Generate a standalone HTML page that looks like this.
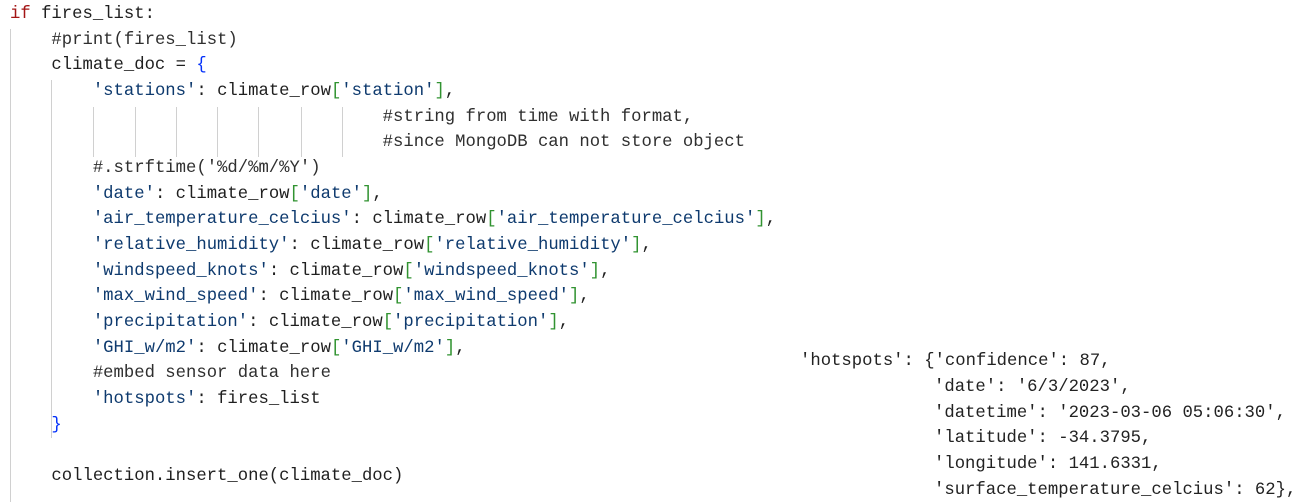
<!DOCTYPE html>
<html><head><meta charset="utf-8"><style>
html,body{margin:0;padding:0;background:#fff;width:1303px;height:502px;overflow:hidden;position:relative}
.l{position:absolute;left:10px;white-space:pre;font-family:"Liberation Mono",monospace;font-size:17.25px;line-height:25.67px;height:25.67px;color:#1f1f1f}
.s{color:#0e3a6e}.k{color:#a31515}.c{color:#2f2f2f}.b{color:#0431fa}.g{color:#319331}
.r{position:absolute;white-space:pre;font-family:"Liberation Mono",monospace;font-size:17.25px;line-height:25.67px;color:#222}
.v{position:absolute;width:1px;background:#d0d0d0}
</style></head><body>
<div class="v" style="left:10px;top:29px;height:473px"></div>
<div class="v" style="left:51px;top:80px;height:358px"></div>
<div class="v" style="left:93px;top:107px;height:50px"></div>
<div class="v" style="left:135px;top:107px;height:50px"></div>
<div class="v" style="left:176px;top:107px;height:50px"></div>
<div class="v" style="left:217px;top:107px;height:50px"></div>
<div class="v" style="left:258px;top:107px;height:50px"></div>
<div class="v" style="left:301px;top:107px;height:50px"></div>
<div class="v" style="left:342px;top:107px;height:50px"></div>

<div class="l" style="top:2px"><span class="k">if</span> fires_list:</div>
<div class="l" style="top:27.7px">    <span class="c">#print(fires_list)</span></div>
<div class="l" style="top:53.3px">    climate_doc = <span class="b">{</span></div>
<div class="l" style="top:79px">        <span class="s">'stations'</span>: climate_row<span class="g">[</span><span class="s">'station'</span><span class="g">]</span>,</div>
<div class="l" style="top:104.7px">                                    <span class="c">#string from time with format,</span></div>
<div class="l" style="top:130.4px">                                    <span class="c">#since MongoDB can not store object</span></div>
<div class="l" style="top:156px">        <span class="c">#.strftime('%d/%m/%Y')</span></div>
<div class="l" style="top:181.7px">        <span class="s">'date'</span>: climate_row<span class="g">[</span><span class="s">'date'</span><span class="g">]</span>,</div>
<div class="l" style="top:207.4px">        <span class="s">'air_temperature_celcius'</span>: climate_row<span class="g">[</span><span class="s">'air_temperature_celcius'</span><span class="g">]</span>,</div>
<div class="l" style="top:233px">        <span class="s">'relative_humidity'</span>: climate_row<span class="g">[</span><span class="s">'relative_humidity'</span><span class="g">]</span>,</div>
<div class="l" style="top:258.7px">        <span class="s">'windspeed_knots'</span>: climate_row<span class="g">[</span><span class="s">'windspeed_knots'</span><span class="g">]</span>,</div>
<div class="l" style="top:284.4px">        <span class="s">'max_wind_speed'</span>: climate_row<span class="g">[</span><span class="s">'max_wind_speed'</span><span class="g">]</span>,</div>
<div class="l" style="top:310px">        <span class="s">'precipitation'</span>: climate_row<span class="g">[</span><span class="s">'precipitation'</span><span class="g">]</span>,</div>
<div class="l" style="top:335.7px">        <span class="s">'GHI_w/m2'</span>: climate_row<span class="g">[</span><span class="s">'GHI_w/m2'</span><span class="g">]</span>,</div>
<div class="l" style="top:361.4px">        <span class="c">#embed sensor data here</span></div>
<div class="l" style="top:387px">        <span class="s">'hotspots'</span>: fires_list</div>
<div class="l" style="top:412.7px">    <span class="b">}</span></div>
<div class="l" style="top:464px">    collection.insert_one(climate_doc)</div>

<div class="r" style="left:800px;top:349px">'hotspots': {'confidence': 87,</div>
<div class="r" style="left:934px;top:375px">'date': '6/3/2023',
'datetime': '2023-03-06 05:06:30',
'latitude': -34.3795,
'longitude': 141.6331,
'surface_temperature_celcius': 62},</div>
</body></html>
